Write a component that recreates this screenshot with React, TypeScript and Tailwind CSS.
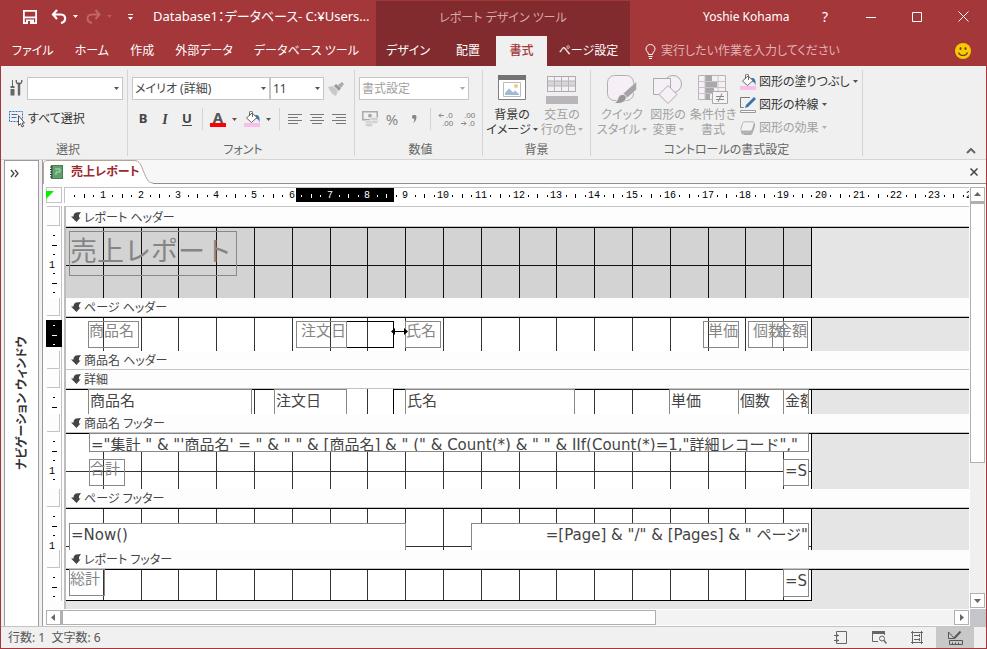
import React from 'react';
import clsx from 'clsx';

const CM = 37.795;
const cm = (n: number) => Math.floor(CM * n - 0.5);
const PAGE_WIDTH = 745;

/* ---------- small shared pieces ---------- */

function Arrow({ className = 'text-[#555]' }: { className?: string }) {
  return (
    <svg width="5" height="3" viewBox="0 0 5 3" className={clsx('shrink-0', className)} aria-hidden="true">
      <path d="M0 0h5L2.5 3z" fill="currentColor" />
    </svg>
  );
}

function Combo({ label, value, className, muted }: { label: string; value: string; className: string; muted?: boolean }) {
  return (
    <div className={clsx('relative h-[23px]', className)}>
      <select
        aria-label={label}
        className={clsx(
          'w-full h-full appearance-none border border-[#c6c6c6] bg-white pl-[2px] pr-4 leading-5',
          muted ? 'text-[#a0a0a0]' : 'text-[#444]',
        )}
      >
        <option>{value}</option>
      </select>
      <span className="absolute right-1 top-[10px] pointer-events-none">
        <Arrow className={muted ? 'text-[#aaa]' : 'text-[#555]'} />
      </span>
    </div>
  );
}

function Group({ title, className, children }: { title: string; className?: string; children: React.ReactNode }) {
  return (
    <section className={clsx('flex flex-col shrink-0 border-r border-[#d4d4d4]', className)}>
      {children}
      <h2 className="mt-auto text-center leading-3 text-[#666]">{title}</h2>
    </section>
  );
}

function Divider() {
  return <span className="w-px h-[22px] bg-[#d4d4d4] shrink-0" />;
}

/* ---------- title bar and tabs ---------- */

function QuickAccess() {
  return (
    <div className="h-[35px] pb-1 flex items-center pl-[21px] text-white">
      <button aria-label="上書き保存" className="w-[16px]">
        <svg width="16" height="16" viewBox="0 0 16 16" fill="none">
          <path d="M1.900 1.900h12.200v12.200H1.900z" stroke="white" strokeWidth="1.800" />
          <path d="M2 8.400h12" stroke="white" strokeWidth="1.800" />
          <path d="M4 10.500h8V15H4z" fill="white" />
          <path d="M6 12h2v3H6z" fill="#a4373a" />
        </svg>
      </button>
      <button aria-label="元に戻す" className="ml-3 flex items-center gap-[5px]">
        <svg width="18" height="15" viewBox="0 0 18 15" fill="none" stroke="white" strokeWidth="2.200">
          <path d="M7 1L3 5.500 7 10M3 5.500h8c5.500.5 5.500 7 0 8.500" />
        </svg>
        <Arrow className="text-white" />
      </button>
      <button aria-label="やり直し" className="ml-2 flex items-center gap-[5px] text-[#c0666a]">
        <svg width="16" height="15" viewBox="0 0 16 15" fill="none" stroke="currentColor" strokeWidth="2">
          <path d="M9.500 1l4 4.500-4 4.500M14 5.500H6c-6 .5-6 7 0 8.500" />
        </svg>
        <Arrow className="text-[#b9585b]" />
      </button>
      <button aria-label="クイック アクセス ツール バーのユーザー設定" className="ml-4 flex flex-col items-center gap-[2px]">
        <span className="w-[5px] h-px bg-white" />
        <Arrow className="text-white" />
      </button>
      <span className="ml-5 text-[13px] whitespace-nowrap">Database1：データベース- C:¥Users…</span>
    </div>
  );
}

function Header() {
  return (
    <header className="flex bg-[#a4373a] text-white shrink-0">
      <div className="w-[375px] shrink-0">
        <QuickAccess />
        <nav className="h-[30px] flex items-center justify-between pl-[11px] pr-[17px] whitespace-nowrap">
          <button>ファイル</button>
          <button>ホーム</button>
          <button>作成</button>
          <button>外部データ</button>
          <button>データベース ツール</button>
        </nav>
      </div>
      <div className="w-[254px] shrink-0 bg-[#812b2e]">
        <div className="h-[35px] pb-0.5 flex items-center justify-center text-[#d9a9aa]">レポート デザイン ツール</div>
        <nav className="h-[30px] flex items-center whitespace-nowrap">
          <button className="w-[64px]">デザイン</button>
          <button className="w-[56px]">配置</button>
          <button className="w-[51px] h-full bg-[#f0f0f0] text-[#a4373a] font-medium">書式</button>
          <button className="flex-1">ページ設定</button>
        </nav>
      </div>
      <div className="flex-1 min-w-0">
        <div className="h-[35px] pb-1 flex items-center">
          <span className="ml-[73px] whitespace-nowrap">Yoshie Kohama</span>
          <div className="ml-auto mr-[17px] flex items-center">
            <button aria-label="ヘルプ" className="w-[32px] text-[14px]">?</button>
            <button aria-label="最小化" className="w-[60px] flex justify-center">
              <svg width="10" height="12"><path d="M0 6.500h10" stroke="white" /></svg>
            </button>
            <button aria-label="最大化" className="w-8 flex justify-center">
              <svg width="10" height="10"><path d="M.5.5h9v9h-9z" stroke="white" fill="none" /></svg>
            </button>
            <button aria-label="閉じる" className="w-[36px] flex justify-end">
              <svg width="11" height="11"><path d="M.5.5l10 10M10.500.5l-10 10" stroke="white" /></svg>
            </button>
          </div>
        </div>
        <div className="h-[30px] flex items-center pl-[15px] pr-[15px]">
          <svg width="11" height="15" viewBox="0 0 11 15" fill="none" stroke="white">
            <path d="M3.500 10.500c0-2.500-2.500-3-2.500-5.500a4.500 4.500 0 0 1 9 0c0 2.500-2.500 3-2.500 5.500zM3.500 12.500h4M4 14.500h3" />
          </svg>
          <input
            aria-label="操作アシスト"
            placeholder="実行したい作業を入力してください"
            className="ml-[5px] flex-1 min-w-0 bg-transparent outline-none placeholder:text-[#e0b4b5]"
          />
          <button aria-label="フィードバックの送信">
            <svg width="16" height="16" viewBox="0 0 16 16">
              <circle cx="8" cy="8" r="8" fill="#fcc900" />
              <ellipse cx="5.500" cy="5.500" rx="1" ry="1.500" fill="#5a4a20" />
              <ellipse cx="10.500" cy="5.500" rx="1" ry="1.500" fill="#5a4a20" />
              <path d="M3.500 9.500c1.500 4 7.500 4 9 0" stroke="#5a4a20" strokeWidth="1.200" fill="none" />
            </svg>
          </button>
        </div>
      </div>
    </header>
  );
}

/* ---------- ribbon ---------- */

function AlignIcon({ short }: { short: 'left' | 'center' | 'right' }) {
  const x = short === 'left' ? 0 : short === 'center' ? 2 : 4;
  return (
    <svg width="14" height="11" fill="#777" shapeRendering="crispEdges" aria-hidden="true">
      <path d={`M0 0h14v1H0zM${x} 3h10v1H${x}zM0 6h14v1H0zM${x} 9h10v1H${x}z`} />
    </svg>
  );
}

function BucketIcon() {
  return (
    <svg width="16" height="16" viewBox="0 0 16 16" fill="none" aria-hidden="true">
      <path d="M11 4c4-.5 5 2 4.500 7.500-.6-3-2-3.500-3.500-4z" fill="#3b73af" />
      <path d="M2.500 7L8 2l5 4.500-5.500 5z" fill="white" stroke="#666" />
      <path d="M5.500 5V1.500a1.500 1.500 0 0 1 3 0V6" stroke="#666" />
      <path d="M0 12h16v4H0z" fill="#f8bde8" />
    </svg>
  );
}

function SelectGroup() {
  return (
    <Group title="選択" className="w-[127px] pl-2 pt-[7px]">
      <div className="flex items-center">
        <svg width="14" height="17" viewBox="0 0 14 17" fill="#666" aria-hidden="true">
          <path d="M3 0h1v6H3zM1.500 6h4v2h-4zM1.500 9h4v6.500h-4zM6.500 0c0 3 1 4 2.300 4.500V15.500h2.400V4.500C12.500 4 13.500 3 13.500 0h-1.500v2.500H8V0z" />
        </svg>
        <Combo label="オブジェクト" value="" className="ml-1 w-24" />
      </div>
      <button className="mt-[7px] flex items-center gap-[2px] leading-6 text-[#333] whitespace-nowrap">
        <svg width="17" height="17" viewBox="0 0 17 17" fill="none" aria-hidden="true">
          <path d="M.5.5h13v10H.5z" stroke="#3b73af" strokeDasharray="2 1" />
          <path d="M2.500 3.500h6M2.500 6.500h5" stroke="#3b73af" />
          <path d="M9.500 4.500v10l2-2 1.500 3.500 1.600-.8-1.500-3.200h2.400z" fill="white" stroke="#555" />
        </svg>
        すべて選択
      </button>
    </Group>
  );
}

function FontGroup() {
  return (
    <Group title="フォント" className="w-[227px] pl-1 pt-[7px]">
      <div className="flex items-center">
        <Combo label="フォント" value="メイリオ (詳細)" className="w-[138px]" />
        <Combo label="フォント サイズ" value="11" className="w-[54px]" />
        <button aria-label="書式のコピー/貼り付け" className="ml-1">
          <svg width="17" height="14" viewBox="0 0 17 14" aria-hidden="true">
            <path d="M0 5l5-1 5 5-2 5c-3-1-5-3-8-9z" fill="#cbc8cb" />
            <path d="M6 4l2-2 5 4-2 3z" fill="#999" />
            <path d="M10 3l4-3 2 2-3 4z" fill="#aaa" />
          </svg>
        </button>
      </div>
      <div className="mt-[7px] h-6 flex items-center text-[13px] text-[#444]">
        <button className="w-[22px] font-bold">B</button>
        <button className="w-[22px] font-bold italic font-['Liberation_Serif',serif] text-[14px]">I</button>
        <button className="w-[22px] font-bold underline underline-offset-2">U</button>
        <span className="w-1" />
        <Divider />
        <button aria-label="フォントの色" className="ml-[7px] flex items-center gap-[6px]">
          <span className="w-4 h-[16px] flex flex-col items-center">
            <span className="text-[15px] leading-3 font-bold text-[#555]">A</span>
            <span className="w-4 h-1 bg-[#ff0000]" />
          </span>
          <Arrow />
        </button>
        <button aria-label="背景色" className="ml-[7px] flex items-center gap-[6px]">
          <BucketIcon />
          <Arrow />
        </button>
        <span className="w-2" />
        <Divider />
        <button aria-label="左揃え" className="ml-2"><AlignIcon short="left" /></button>
        <button aria-label="中央揃え" className="ml-2"><AlignIcon short="center" /></button>
        <button aria-label="右揃え" className="ml-2"><AlignIcon short="right" /></button>
      </div>
    </Group>
  );
}

function DecimalIcon({ more }: { more?: boolean }) {
  return (
    <svg width="18" height="20" viewBox="0 0 18 20" className="font-['Liberation_Sans',sans-serif] text-[8px]" fill="#777" aria-hidden="true">
      <text x={more ? 8 : 4} y="9">{more ? '.0' : '.00'}</text>
      <text x={more ? 4 : 8} y="17">{more ? '.00' : '.0'}</text>
      <path d={more ? 'M6 6.500H1M3 4.500l-2 2 2 2' : 'M1 14.500h5M4 12.500l2 2-2 2'} stroke="#888" fill="none" />
    </svg>
  );
}

function NumberGroup() {
  return (
    <Group title="数値" className="w-[128px] pl-1 pt-[7px]">
      <Combo label="表示形式" value="書式設定" className="w-[110px]" muted />
      <div className="mt-[7px] h-6 flex items-center text-[#888]">
        <button aria-label="通貨" className="ml-[3px]">
          <svg width="17" height="16" viewBox="0 0 17 16" fill="none" aria-hidden="true">
            <path d="M.8.8h14.400v8H.8z" stroke="#aaa" strokeWidth="1.500" />
            <circle cx="8" cy="4.800" r="2" fill="#aaa" />
            <g fill="#d0cdd0" stroke="#f0f0f0" strokeWidth=".7">
              <ellipse cx="12" cy="8" rx="4" ry="1.800" />
              <ellipse cx="12" cy="11" rx="4" ry="1.800" />
              <ellipse cx="7" cy="11.500" rx="4" ry="1.800" />
              <ellipse cx="7" cy="14" rx="4" ry="1.800" />
            </g>
          </svg>
        </button>
        <button aria-label="パーセント" className="ml-[5px] w-[16px] text-[15px]">%</button>
        <button aria-label="桁区切り" className="ml-3">
          <svg width="5" height="8"><path d="M0 2a2 2 0 0 1 4.500 0c0 3-1.500 5-3.500 6 1-1.500 1.500-2.500 1.200-4C1 4 0 3 0 2z" fill="#888" /></svg>
        </button>
        <span className="w-[13px]" />
        <Divider />
        <button aria-label="小数点以下の表示桁数を増やす" className="ml-[7px]"><DecimalIcon more /></button>
        <button aria-label="小数点以下の表示桁数を減らす" className="ml-1"><DecimalIcon /></button>
      </div>
    </Group>
  );
}

function BigButton({ icon, top, bottom, arrow, className, muted }: {
  icon: React.ReactNode; top: string; bottom: string; arrow?: boolean; className: string; muted?: boolean;
}) {
  return (
    <button className={clsx('flex flex-col items-center whitespace-nowrap leading-[15px]', className, muted ? 'text-[#a0a0a0]' : 'text-[#333]')}>
      <span className="h-8 flex items-start justify-center">{icon}</span>
      <span>{top}</span>
      <span className="flex items-center gap-0.5">
        {bottom}
        {arrow && <Arrow className={muted ? 'text-[#b0b0b0]' : 'text-[#555]'} />}
      </span>
    </button>
  );
}

function BackgroundGroup() {
  return (
    <Group title="背景" className="w-[108px] pt-[5px]">
      <div className="flex pl-1">
        <BigButton
          className="w-[50px]"
          top="背景の"
          bottom="イメージ"
          arrow
          icon={
            <svg width="28" height="25" viewBox="0 0 28 25" fill="none" aria-hidden="true">
              <path d="M.5.500h27v24H.5z" fill="white" stroke="#808080" />
              <path d="M0 0h28v5H0z" fill="#737373" />
              <path d="M5.500 7.500h17v14h-17z" stroke="#bbb" />
              <path d="M7 20v-2l4-4.500 4 4 2-2 4 3.500v1z" fill="#9fb9d8" />
              <circle cx="18" cy="11" r="2" fill="#f0c880" />
            </svg>
          }
        />
        <BigButton
          className="w-[50px]"
          top="交互の"
          bottom="行の色"
          arrow
          muted
          icon={
            <svg width="32" height="29" viewBox="0 0 32 29" fill="none" aria-hidden="true">
              <path d="M1.500 1.500h28v15h-28z" fill="#f6eff5" stroke="#aaa" />
              <path d="M2 6h27v5H2z" fill="#d8d5d8" />
              <path d="M8.500 1.500v15M15.500 1.500v15M22.500 1.500v15M1.500 6h28M1.500 11h28" stroke="#b8b5b8" />
              <path d="M0 21h32v8H0z" fill="#b9b6b9" />
            </svg>
          }
        />
      </div>
    </Group>
  );
}

function ControlGroup() {
  return (
    <Group title="コントロールの書式設定" className="w-[272px]">
      <div className="flex pl-[5px]">
        <div className="flex pt-[5px]">
          <BigButton
            className="w-[52px]"
            top="クイック"
            bottom="スタイル"
            arrow
            muted
            icon={
              <svg width="30" height="30" viewBox="0 0 30 30" fill="none" aria-hidden="true">
                <rect x=".5" y=".5" width="26" height="25" rx="7" fill="#f6eff5" stroke="#b0adb0" />
                <path d="M29.500 6.500v8L19 24l-4.500-4z" fill="#a5a3a5" stroke="#f0f0f0" strokeWidth=".6" />
                <path d="M15 19.500c3-.5 5 1.500 4 4.500-1.500 4-6 5-12.500 4.500 3-1 3.500-3 4.500-5.500.8-2 2-3.300 4-3.500z" fill="#999" stroke="#f0f0f0" />
              </svg>
            }
          />
          <BigButton
            className="w-[40px]"
            top="図形の"
            bottom="変更"
            arrow
            muted
            icon={
              <svg width="30" height="29" viewBox="0 0 30 29" fill="#f6eff5" stroke="#aaa" aria-hidden="true">
                <circle cx="20" cy="9" r="8.500" />
                <path d="M.5 3.500h17v16H.5z" />
                <path d="M15 10.500l9 9-9 9-9-9z" />
              </svg>
            }
          />
          <BigButton
            className="w-[50px]"
            top="条件付き"
            bottom="書式"
            muted
            icon={
              <svg width="30" height="30" viewBox="0 0 30 30" fill="none" aria-hidden="true">
                <path d="M.5.500h27v24H.5z" fill="#f6eff5" stroke="#b8b5b8" />
                <path d="M7 0h7v6H7zM7 7h12v5H7zM7 13h9v5H7zM7 19h5v6H7z" fill="#aaa8aa" />
                <path d="M7 .5v24M20 .5v24M.5 6.500h27M.5 12.500h27M.5 18.500h27" stroke="#c8c5c8" />
                <path d="M14.500 16.500h15v12h-15z" fill="#f4f4f4" stroke="#aaa" />
                <path d="M18 21.500h8M18 24.500h8M24 18.500l-4 8.500" stroke="#888" />
              </svg>
            }
          />
        </div>
        <div className="flex flex-col pl-0.5 text-[#333] whitespace-nowrap">
          <button className="h-[23px] flex items-center gap-[3px]">
            <BucketIcon />
            図形の塗りつぶし
            <Arrow />
          </button>
          <button className="h-[23px] flex items-center gap-[3px]">
            <svg width="16" height="16" viewBox="0 0 16 16" fill="none" aria-hidden="true">
              <path d="M10 .5H.5v10h3" stroke="#777" />
              <path d="M14 0l2 2-8 8-3 1 1-3z" fill="#3b73af" />
              <path d="M.5 13.500h15v2H.5z" fill="white" stroke="#999" />
            </svg>
            図形の枠線
            <Arrow />
          </button>
          <button className="h-[23px] flex items-center gap-[3px] text-[#a0a0a0]">
            <svg width="16" height="14" viewBox="0 0 16 14" aria-hidden="true">
              <path d="M5 2h8c2 0 2.500 1 2 3l-2 6c-.5 2-1.500 3-3 3H4z" fill="#a8a5a8" />
              <path d="M5 .8h7c2 0 2.500.8 2 2.500L12.500 8c-.5 1.500-1.200 2-3 2H2.500C1 10 .5 9 1 7.500l1.500-5C3 1 4 .8 5 .8z" fill="#f4f0f4" stroke="#b5b2b5" />
              <path d="M1 8.500c0 1 .5 1.500 1.500 1.500h7c1.800 0 2.500-.5 3-2l.5 1c-.5 3-1.500 4.500-4 4.500H3C1.500 13.500.5 12 1 8.500z" fill="#b5b2b5" />
            </svg>
            図形の効果
            <Arrow className="text-[#b0b0b0]" />
          </button>
        </div>
      </div>
    </Group>
  );
}

function Ribbon() {
  return (
    <div className="h-[94px] shrink-0 flex bg-[#f0f0f0] border-b border-[#d4d4d4] pt-1 pb-[3px]">
      <SelectGroup />
      <FontGroup />
      <NumberGroup />
      <BackgroundGroup />
      <ControlGroup />
      <button aria-label="リボンを折りたたむ" className="ml-auto self-end mr-[10px] pb-0.5">
        <svg width="10" height="6" fill="none"><path d="M1 5l4-4 4 4" stroke="#666" strokeWidth="2" /></svg>
      </button>
    </div>
  );
}

/* ---------- report designer ---------- */

type Field = {
  text?: string;
  x: number;
  y: number;
  w: number;
  h: number;
  solid?: boolean;
  black?: boolean;
  right?: boolean;
  large?: boolean;
};

type SectionData = {
  name: string;
  height: number;
  shaded?: boolean;
  bottomLine?: boolean;
  selected?: boolean;
  fields: Field[];
};

const sections: SectionData[] = [
  {
    name: 'レポート ヘッダー',
    height: 71,
    shaded: true,
    fields: [{ text: '売上レポート', x: 3, y: 4, w: 168, h: 45, large: true }],
  },
  {
    name: 'ページ ヘッダー',
    height: 34,
    selected: true,
    fields: [
      { x: 230, y: 4, w: 98, h: 27, black: true },
      { text: '商品名', x: 22, y: 4, w: 51, h: 27 },
      { text: '注文日', x: 230, y: 4, w: 51, h: 27, right: true },
      { text: '氏名', x: 339, y: 4, w: 36, h: 27 },
      { text: '単価', x: 637, y: 4, w: 36, h: 27, right: true },
      { text: '個数', x: 682, y: 4, w: 36, h: 27, right: true },
      { text: '金額', x: 706, y: 4, w: 36, h: 27, right: true },
    ],
  },
  { name: '商品名 ヘッダー', height: 0, fields: [] },
  {
    name: '詳細',
    height: 25,
    fields: [
      { text: '商品名', x: 22, y: 0, w: 164, h: 27, solid: true },
      { text: '注文日', x: 208, y: 0, w: 73, h: 27, solid: true },
      { text: '氏名', x: 339, y: 0, w: 170, h: 27, solid: true },
      { text: '単価', x: 603, y: 0, w: 70, h: 27, solid: true },
      { text: '個数', x: 672, y: 0, w: 46, h: 27, solid: true },
      { text: '金額', x: 717, y: 0, w: 26, h: 27, solid: true },
    ],
  },
  {
    name: '商品名 フッター',
    height: 56,
    fields: [
      {
        text: `="集計 " & "'商品名' = " & " " & [商品名] & " (" & Count(*) & " " & IIf(Count(*)=1,"詳細レコード","`,
        x: 23, y: 0, w: 720, h: 19, solid: true,
      },
      { text: '合計', x: 23, y: 26, w: 36, h: 27 },
      { text: '=S', x: 717, y: 26, w: 26, h: 27, solid: true },
    ],
  },
  {
    name: 'ページ フッター',
    height: 42,
    fields: [
      { text: '=Now()', x: 3, y: 15, w: 337, h: 30, solid: true },
      { text: '=[Page] & "/" & [Pages] & " ページ"', x: 405, y: 15, w: 338, h: 30, solid: true, right: true },
    ],
  },
  {
    name: 'レポート フッター',
    height: 32,
    bottomLine: true,
    fields: [
      { text: '総計', x: 3, y: 0, w: 36, h: 27 },
      { text: '=S', x: 717, y: 0, w: 26, h: 28, solid: true },
    ],
  },
];

function FieldBox({ field }: { field: Field }) {
  return (
    <div
      className={clsx(
        'absolute border overflow-hidden whitespace-pre',
        field.black ? 'border-black' : 'border-[#888]',
        field.solid ? 'bg-white text-[#444] pl-px' : 'text-[#858585]',
        field.right && 'flex justify-end',
        field.large ? 'text-[27px] leading-10' : field.solid ? 'text-[15px] leading-[22px]' : 'text-[15px] leading-[18px]',
      )}
      style={{ left: field.x, top: field.y, width: field.w, height: field.h }}
    >
      {field.text}
    </div>
  );
}

function Grid({ height, shaded, bottomLine }: { height: number; shaded?: boolean; bottomLine?: boolean }) {
  const ink = shaded ? '#111' : '#333';
  return (
    <svg width={PAGE_WIDTH + 1} height={height} className="block" shapeRendering="crispEdges" aria-hidden="true">
      <rect width={PAGE_WIDTH} height={height} fill={shaded ? '#d3d3d3' : '#fff'} />
      {Array.from({ length: 19 }, (_, i) => (
        <rect key={i} x={cm(i + 1)} y="0" width="1" height={height} fill={ink} />
      ))}
      {height > 40 && <rect x="0" y="38" width={PAGE_WIDTH} height="1" fill={ink} />}
      <rect x={PAGE_WIDTH} width="1" height={height} />
      <rect width={PAGE_WIDTH + 1} height="1" />
      {bottomLine && <rect y={height - 1} width={PAGE_WIDTH + 1} height="1" />}
    </svg>
  );
}

function VerticalRuler({ height, selected }: { height: number; selected?: boolean }) {
  const marks = Array.from({ length: 8 }, (_, i) => i + 1).filter((q) => q * 9.45 < height - 2);
  return (
    <svg width="16" height={height} className="block font-['Liberation_Mono',monospace] text-[10px]" aria-hidden="true">
      <rect width="15" height={height} fill="#fff" />
      {selected && <rect y="3" width="16" height="27" />}
      {marks.map((q) => {
        const y = Math.round(q * 9.45);
        const fill = selected ? '#fff' : '#000';
        if (q % 4 === 0) return <text key={q} x="3" y={y + 3} fill={fill}>{q / 4}</text>;
        return q % 2 === 0
          ? <rect key={q} x="6" y={y - 1} width="5" height="1" fill={fill} />
          : <rect key={q} x="7" y={y - 1} width="2" height="1" fill={fill} />;
      })}
    </svg>
  );
}

function HorizontalRuler() {
  const quarters = Array.from({ length: 100 }, (_, i) => i + 1);
  return (
    <svg width="100%" height="17" className="block font-['Liberation_Mono',monospace] text-[10px]" aria-hidden="true">
      <rect x="230" y="0" width="98" height="14" />
      {quarters.map((q) => {
        const x = Math.floor((q * CM) / 4 - 0.5);
        const fill = x > 230 && x < 327 ? '#fff' : '#000';
        if (q % 4 === 0) return <text key={q} x={x} y="10" textAnchor="middle" fill={fill}>{q / 4}</text>;
        return q % 2 === 0
          ? <rect key={q} x={x} y="6" width="1" height="4" fill={fill} />
          : <rect key={q} x={x} y="7" width="1" height="2" fill={fill} />;
      })}
    </svg>
  );
}

function SectionMark() {
  return (
    <svg width="10" height="10" viewBox="0 0 10 10" fill="#444" className="mb-0.5" aria-hidden="true">
      <path d="M5 .5L10 0 8 3v2.500h1.500L5.500 10 0 4.500h2.500C2.500 2.500 3.500 1 5 .5z" />
    </svg>
  );
}

function Section({ section, first }: { section: SectionData; first?: boolean }) {
  return (
    <div className="flex gap-0.5">
      <div className="w-4 shrink-0 border-r border-[#c4c4c4] bg-[#fdfdfd]">
        <div className={clsx('mr-px ml-px border-r border-b border-[#c4c4c4]', first ? 'h-5 border-t' : 'h-[18px] mb-px')} />
        {first && <div className="h-px" />}
        {section.height > 0 && <VerticalRuler height={section.height} selected={section.selected} />}
      </div>
      <div className="flex-1 min-w-0 border-l-2 border-[#bdbdbd]">
        <h3 className={clsx('flex items-center gap-[3px] pl-[5px] pt-0.5 bg-[#fdfdfd] border-b border-[#c4c4c4] leading-4 text-[#444] whitespace-nowrap', first ? 'h-[21px] border-t' : 'h-[19px]')}>
          <SectionMark />
          {section.name}
        </h3>
        {section.height > 0 && (
          <div className="relative overflow-hidden bg-[#e5e5e5] font-['DejaVu_Sans','Noto_Sans_CJK_JP',sans-serif] [font-feature-settings:normal]">
            <div className="absolute inset-x-0 top-0 h-px bg-black" />
            <Grid height={section.height} shaded={section.shaded} bottomLine={section.bottomLine} />
            {section.name === '詳細' && (
              <div className="absolute left-[281px] top-0 w-[47px] h-full bg-white border-r border-black">
                <div className="ml-5 w-px h-full bg-[#333]" />
              </div>
            )}
            {section.fields.map((field, i) => (
              <FieldBox key={i} field={field} />
            ))}
            {section.selected && (
              <svg width="17" height="9" viewBox="0 0 17 9" className="absolute left-[325px] top-[10px]" aria-hidden="true">
                <path d="M0 4.500L4 1v3h9V1l4 3.500L13 8V5H4v3z" />
              </svg>
            )}
          </div>
        )}
      </div>
    </div>
  );
}

function ScrollButton({ label, d }: { label: string; d: string }) {
  return (
    <button aria-label={label} className="w-[15px] h-[15px] shrink-0 bg-white border border-[#b0b0b0] flex items-center justify-center">
      <svg width="7" height="7" fill="#666"><path d={d} /></svg>
    </button>
  );
}

function DocumentTab() {
  return (
    <div className="h-6 shrink-0 flex items-center bg-[#f7f7f7] border-b border-[#8f8f8f]">
      <button className="relative w-[108px] h-6 flex items-center pl-[7px] font-bold text-[#9a2a2e] whitespace-nowrap">
        <svg width="110" height="24" viewBox="0 0 110 24" className="absolute left-0 top-0" aria-hidden="true">
          <path d="M.5 24V4C.5 2 2 .5 4 .5h87c6 0 7 5 10 12 2.500 6 4 10.500 9 10.500v1z" fill="#fff" />
          <path d="M.5 24V4C.5 2 2 .5 4 .5h87c6 0 7 5 10 12 2.500 6 4 10.500 9 10.500" fill="none" stroke="#b5a594" />
        </svg>
        <svg width="13" height="14" viewBox="0 0 13 14" className="relative" aria-hidden="true">
          <path d="M1 0h12v14H1z" fill="#458052" />
          <path d="M3 1h9v12H3z" fill="#5fa06c" />
          <path d="M5 4h5v3H6v3" stroke="#b9dcbf" fill="none" />
          <path d="M0 2h2M0 4.500h2M0 7h2M0 9.500h2M0 12h2" stroke="#333" />
        </svg>
        <span className="relative ml-2">売上レポート</span>
      </button>
      <button aria-label="レポートを閉じる" className="ml-auto mr-2">
        <svg width="8" height="8"><path d="M.5.500l7 7M7.500.5l-7 7" stroke="#444" strokeWidth="1.500" /></svg>
      </button>
    </div>
  );
}

function Designer() {
  return (
    <main className="flex-1 min-w-0 flex flex-col border-l border-[#9a9aa0] bg-[#fdfdfd]">
      <DocumentTab />
      <div className="flex-1 flex pt-[3px]">
        <div className="flex-1 min-w-0 flex flex-col pl-[3px]">
          <div className="flex gap-0.5 h-[19px]">
            <button aria-label="レポートの選択" className="w-4 h-4 border border-[#c4c4c4] shrink-0">
              <svg width="8" height="8" className="-mt-px -ml-px"><path d="M0 0h8L0 8z" fill="#00f000" /></svg>
            </button>
            <div className="flex-1 min-w-0 h-4 border-l border-t border-[#c4c4c4] pl-px bg-white">
              <HorizontalRuler />
            </div>
          </div>
          {sections.map((section, i) => (
            <Section key={section.name} section={section} first={i === 0} />
          ))}
          <div className="flex-1 ml-[18px] border-l-2 border-[#bdbdbd] bg-[#e5e5e5]" />
        </div>
        <div className="w-4 mr-px shrink-0 flex flex-col items-center pb-px">
          <ScrollButton label="上へスクロール" d="M0 5l3.500-4L7 5z" />
          <div className="flex-1 w-[15px] bg-[#f0f0f0]">
            <div className="h-2/3 bg-white border border-t-2 border-[#b0b0b0]" />
          </div>
          <ScrollButton label="下へスクロール" d="M0 2l3.500 4L7 2z" />
        </div>
      </div>
      <div className="flex h-[17px] shrink-0 pl-[3px] items-center">
        <ScrollButton label="左へスクロール" d="M5 0v7L1 3.500z" />
        <div className="flex-1 h-[15px] bg-[#f3f3f3]">
          <div className="h-full w-2/3 bg-white border border-l-2 border-[#b0b0b0]" />
        </div>
        <ScrollButton label="右へスクロール" d="M2 0v7l4-3.500z" />
        <span className="w-4 h-full ml-px bg-[#c5c6cb]" />
      </div>
    </main>
  );
}

function NavigationPane() {
  return (
    <aside className="w-[35px] ml-[3px] mr-[3px] shrink-0 flex flex-col items-center bg-white border border-b-0 border-[#9a9aa0]">
      <button aria-label="ナビゲーション ウィンドウを開く" className="mt-2 mr-[14px]">
        <svg width="9" height="9" fill="none" stroke="#444" strokeWidth="1.300"><path d="M1 1l3 3.500L1 8M5 1l3 3.500L5 8" /></svg>
      </button>
      <span className="mt-auto mb-[156px] rotate-180 [writing-mode:vertical-rl] [text-orientation:sideways] leading-5 font-bold text-[#333] whitespace-nowrap">
        ナビゲーション ウィンドウ
      </span>
    </aside>
  );
}

function StatusBar() {
  return (
    <footer className="h-[22px] shrink-0 flex items-center border-t border-[#c4c4c4] bg-[#f0f0f0] pl-[7px] pr-3 text-[#555]">
      <span className="whitespace-pre">{'行数: 1  文字数: 6'}</span>
      <div className="ml-auto h-full flex">
        <button aria-label="レポート ビュー" className="w-[38px] flex items-center justify-center">
          <svg width="14" height="14" fill="none" stroke="#666"><path d="M2.500.5h10v12h-10zM0 4.500h5M0 9.500h5" /><path d="M3 3v3M3 8v3" /></svg>
        </button>
        <button aria-label="印刷プレビュー" className="w-[38px] flex items-center justify-center">
          <svg width="15" height="13" fill="none" stroke="#666"><path d="M6 10.500H.5V.5h12V4" /><path d="M0 1.500h13" strokeWidth="3" /><circle cx="10" cy="7.500" r="2.500" /><path d="M12 9.500l2.500 3" strokeWidth="1.500" /></svg>
        </button>
        <button aria-label="レイアウト ビュー" className="w-[38px] flex items-center justify-center">
          <svg width="12" height="13" fill="none" stroke="#666"><path d="M1.500 0v13M10.500 0v13M0 1.500h12M0 11.500h12M3 4.500h6M3 8.500h6M8.500 3v3M8.500 7v3" /></svg>
        </button>
        <button aria-label="デザイン ビュー" className="w-[38px] flex items-center justify-center bg-[#c8c8c8]">
          <svg width="15" height="14" fill="none" stroke="#555"><path d="M.5 1v6.500h6zM1.500 9.500h13v4h-13zM4.500 11.500v2M7.500 11.500v2M10.500 11.500v2" /><path d="M12.500.5l-6 6.500" strokeWidth="2" /></svg>
        </button>
      </div>
    </footer>
  );
}

export default function App() {
  return (
    <div className="min-h-screen flex flex-col border border-[#a4373a] bg-[#f0f0f0] font-['Noto_Sans','Noto_Sans_CJK_JP',sans-serif] [font-feature-settings:'palt'] text-[12px]">
      <Header />
      <Ribbon />
      <div className="flex-1 flex">
        <NavigationPane />
        <Designer />
      </div>
      <StatusBar />
    </div>
  );
}
